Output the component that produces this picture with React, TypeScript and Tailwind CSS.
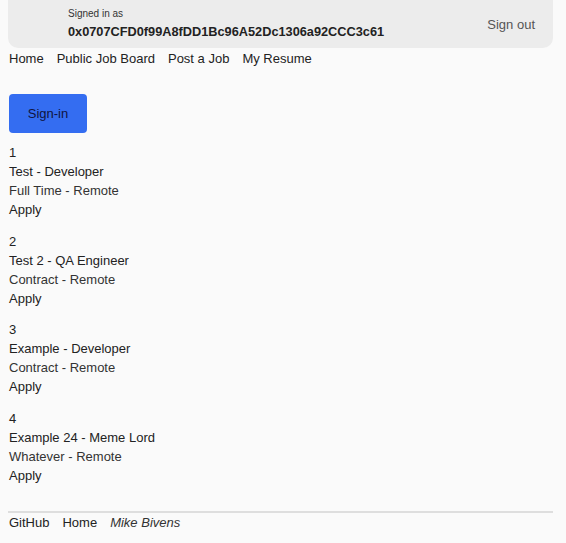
const JOBS = [
  { id: 1, title: "Test - Developer", type: "Full Time - Remote" },
  { id: 2, title: "Test 2 - QA Engineer", type: "Contract - Remote" },
  { id: 3, title: "Example - Developer", type: "Contract - Remote" },
  { id: 4, title: "Example 24 - Meme Lord", type: "Whatever - Remote" },
];

export default function App() {
  return (
    <div className="min-h-[543px] bg-[#fafafa] font-['Liberation_Sans',Arial,sans-serif] text-[13px] leading-[19px] text-[#222]">
      <div className="ml-2 w-[545px]">
        {/* signed-in status bar */}
        <header className="flex h-[48px] items-center justify-between rounded-b-[10px] bg-[#ececec] pl-[60px] pr-[18px]">
          <div className="flex flex-col">
            <span className="text-[10px] leading-[12px] text-[#333]">Signed in as</span>
            <span className="mt-[3px] text-[12.75px] font-bold leading-[17px] text-[#222]">
              0x0707CFD0f99A8fDD1Bc96A52Dc1306a92CCC3c61
            </span>
          </div>
          <span className="text-[13px] text-[#555]">Sign out</span>
        </header>

        <nav className="mt-[1px] flex gap-[13px] pl-[1px]">
          <span>Home</span>
          <span>Public Job Board</span>
          <span>Post a Job</span>
          <span>My Resume</span>
        </nav>

        <button className="mt-[26px] ml-[1px] h-[39px] w-[78px] rounded-[4px] bg-[#346df1] text-[13px] text-[#101440]">
          Sign-in
        </button>

        <div className="mt-[10px] flex flex-col gap-[12.5px] pl-[1px]">
          {JOBS.map((job) => (
            <div key={job.id} className="flex flex-col">
              <span>{job.id}</span>
              <span>{job.title}</span>
              <span className="text-[#333]">{job.type}</span>
              <span>Apply</span>
            </div>
          ))}
        </div>

        <footer className="mt-[26px] border-t-2 border-[#dedede]">
          <div className="flex gap-[13px] pl-[1px] text-[#222]">
            <span>GitHub</span>
            <span>Home</span>
            <em className="text-[#333]">Mike Bivens</em>
          </div>
        </footer>
      </div>
    </div>
  );
}
